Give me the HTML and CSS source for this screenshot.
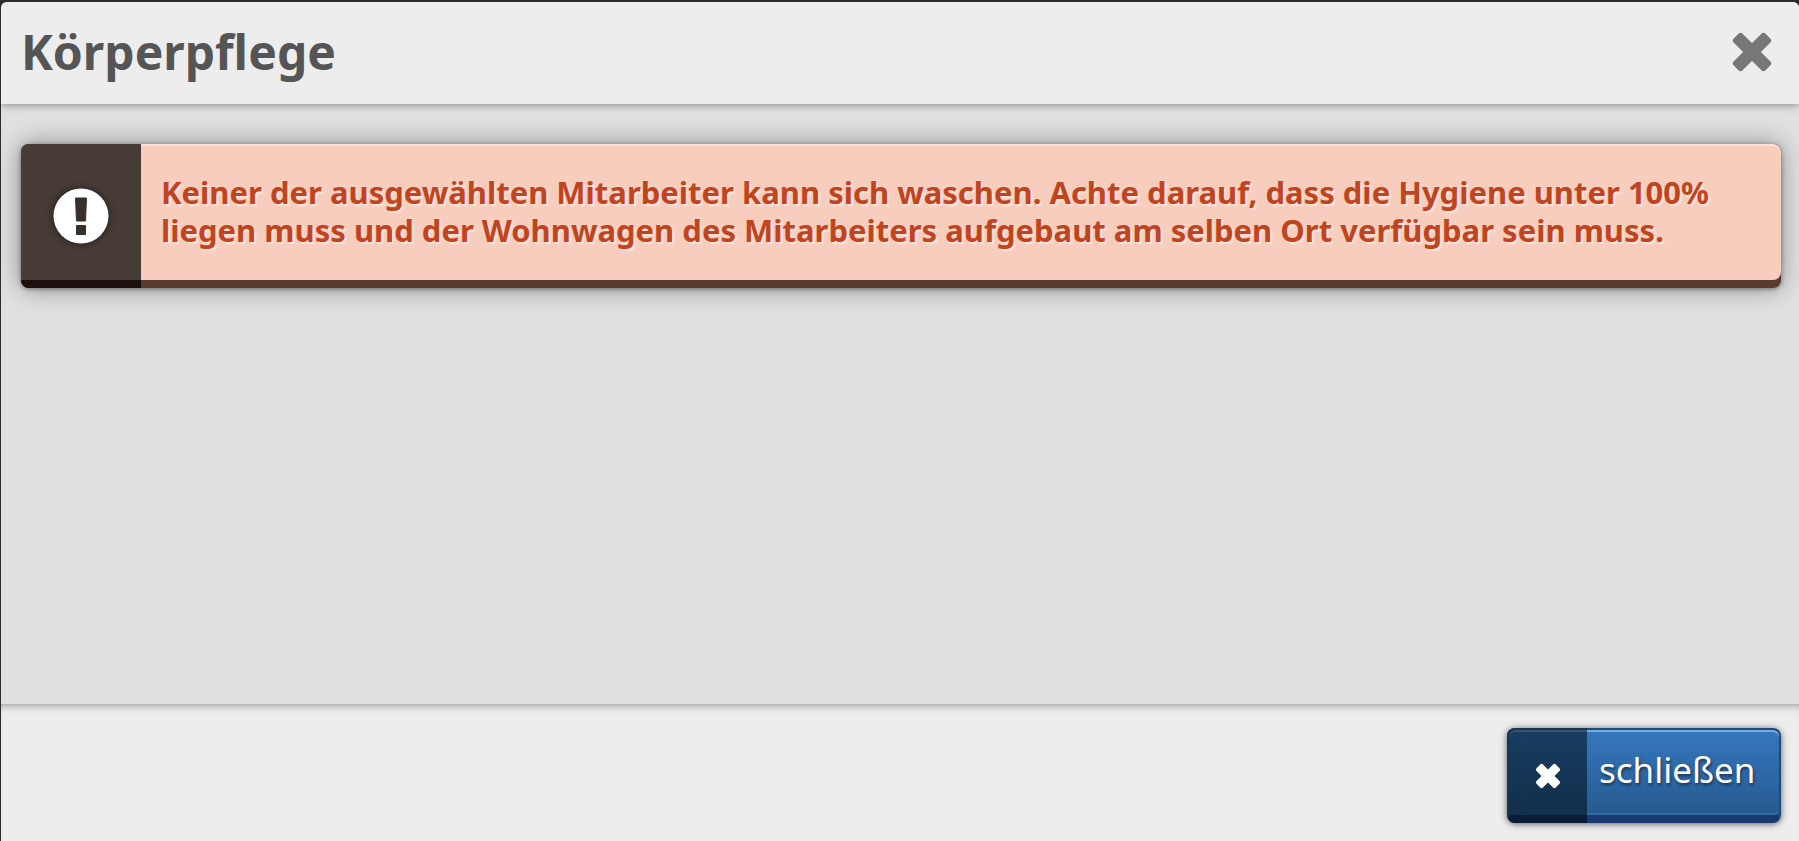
FILE: index.html
```html
<!DOCTYPE html>
<html lang="de">
<head>
  <meta charset="utf-8">
  <title>Körperpflege</title>
  <link rel="stylesheet" href="styles.css">
</head>
<body>
  <div class="dialog">
    <header class="dialog-header">
      <h1>Körperpflege</h1>
      <button type="button" class="close" aria-label="Dialog schließen">
        <svg class="cross" viewBox="-20 -20 40 40">
          <rect x="-22.500" y="-6.250" width="45" height="12.500" rx="3" transform="rotate(45)"/>
          <rect x="-22.500" y="-6.250" width="45" height="12.500" rx="3" transform="rotate(-45)"/>
        </svg>
      </button>
    </header>

    <main class="dialog-content">
      <div class="alert" role="alert">
        <div class="alert-icon">
          <svg viewBox="0 0 56 56">
            <circle cx="28" cy="28" r="27.500" fill="#fff"/>
            <path d="M22.500 10H33.500L32.500 33H23.500ZM23.500 37.500H32.500V46.500H23.500Z" fill="#3a2f2b" stroke="#3a2f2b" stroke-linejoin="round"/>
          </svg>
        </div>
        <p>Keiner der ausgewählten Mitarbeiter kann sich waschen. Achte darauf, dass die Hygiene unter 100% liegen muss und der Wohnwagen des Mitarbeiters aufgebaut am selben Ort verfügbar sein muss.</p>
      </div>
    </main>

    <footer class="dialog-footer">
      <button type="button" class="btn">
        <span class="btn-icon">
          <svg class="cross" viewBox="-20 -20 40 40">
            <rect x="-21" y="-7" width="42" height="14" rx="3" transform="rotate(45)"/>
            <rect x="-21" y="-7" width="42" height="14" rx="3" transform="rotate(-45)"/>
          </svg>
        </span>
        <span class="btn-label">schließen</span>
      </button>
    </footer>
  </div>
</body>
</html>
```
FILE: styles.css
```css
* {
  box-sizing: border-box;
}

body {
  margin: 0;
  padding: 2px 0 0 1px;
  background: #2c2a2c;
  font-family: "Noto Sans", "Open Sans", sans-serif;
}

.dialog {
  display: flex;
  flex-direction: column;
  min-height: calc(100vh - 2px);
  background: #e0e0e0;
  border-radius: 6px 6px 0 0;
  overflow: hidden;
}

.dialog-header {
  display: flex;
  align-items: center;
  justify-content: space-between;
  height: 102px;
  padding: 0 22px 2px 20px;
  background: #ededed;
  box-shadow: 0 1px 8px rgba(0, 0, 0, 0.4);
}

h1 {
  margin: 0;
  color: #555;
  font-size: 48px;
  line-height: 68px;
}

button {
  padding: 0;
  border: none;
  background: none;
  font-family: inherit;
  cursor: pointer;
}

.close {
  display: flex;
  padding: 5px;
}

.close .cross {
  width: 40px;
  height: 40px;
  color: #777;
}

.cross {
  fill: currentColor;
}

.dialog-content {
  flex: 1;
  padding: 40px 18px 40px 20px;
}

.alert {
  display: flex;
  min-height: 144px;
  background: #5b3a30;
  border-radius: 8px;
  box-shadow: 0 0 24px rgba(0, 0, 0, 0.4), 0 1px 4px rgba(0, 0, 0, 0.4);
  overflow: hidden;
}

.alert-icon {
  display: flex;
  align-items: center;
  justify-content: center;
  flex: none;
  width: 120px;
  background: #483c37;
  border-bottom: 8px solid #1b100d;
}

.alert-icon svg {
  width: 56px;
  height: 56px;
  margin-top: 8px;
  filter: drop-shadow(0 0 4px rgba(0, 0, 0, 0.6));
}

.alert p {
  flex: 1;
  margin: 0 0 8px;
  padding: 29px 20px;
  background: #f7cdbd;
  border-radius: 0 8px 8px 0;
  box-shadow: inset 0 2px 0 #fbe2d9;
  color: #c14420;
  font-size: 31px;
  font-weight: bold;
  line-height: 38px;
  text-shadow: 2px 2px 2px rgba(255, 255, 255, 0.5);
}

.dialog-footer {
  display: flex;
  justify-content: flex-end;
  padding: 24px 18px 18px;
  background: #ededed;
  box-shadow: inset 0 8px 8px -7px rgba(0, 0, 0, 0.4);
}

.btn {
  display: flex;
  width: 274px;
  height: 95px;
  border: 2px solid #1e4978;
  border-bottom: 8px solid #193a70;
  border-radius: 8px;
  background: linear-gradient(#3577bd, #265a90) padding-box, #193a70;
  box-shadow: 0 1px 7px rgba(0, 0, 0, 0.6);
  color: #fff;
}

.btn-icon {
  display: flex;
  align-items: center;
  justify-content: center;
  width: 80px;
  margin: -2px 0 -8px -2px;
  border: 2px solid #173654;
  border-right: none;
  border-bottom: 8px solid #0a1c38;
  border-radius: 8px 0 0 8px;
  background: linear-gradient(#183d61, #122f4c);
  box-shadow: inset 0 2px 0 #375367;
}

.btn-icon .cross {
  width: 26px;
  height: 26px;
  margin-top: 6px;
}

.btn-label {
  flex: 1;
  align-self: stretch;
  padding: 17px 0 0 12px;
  border-bottom: 2px solid #2f69a3;
  border-radius: 0 6px 6px 0;
  box-shadow: inset 0 2px 0 #75aedd;
  font-size: 35px;
  line-height: 46px;
  text-align: left;
  text-shadow: 1px 2px 3px rgba(0, 0, 0, 0.5);
}
```
